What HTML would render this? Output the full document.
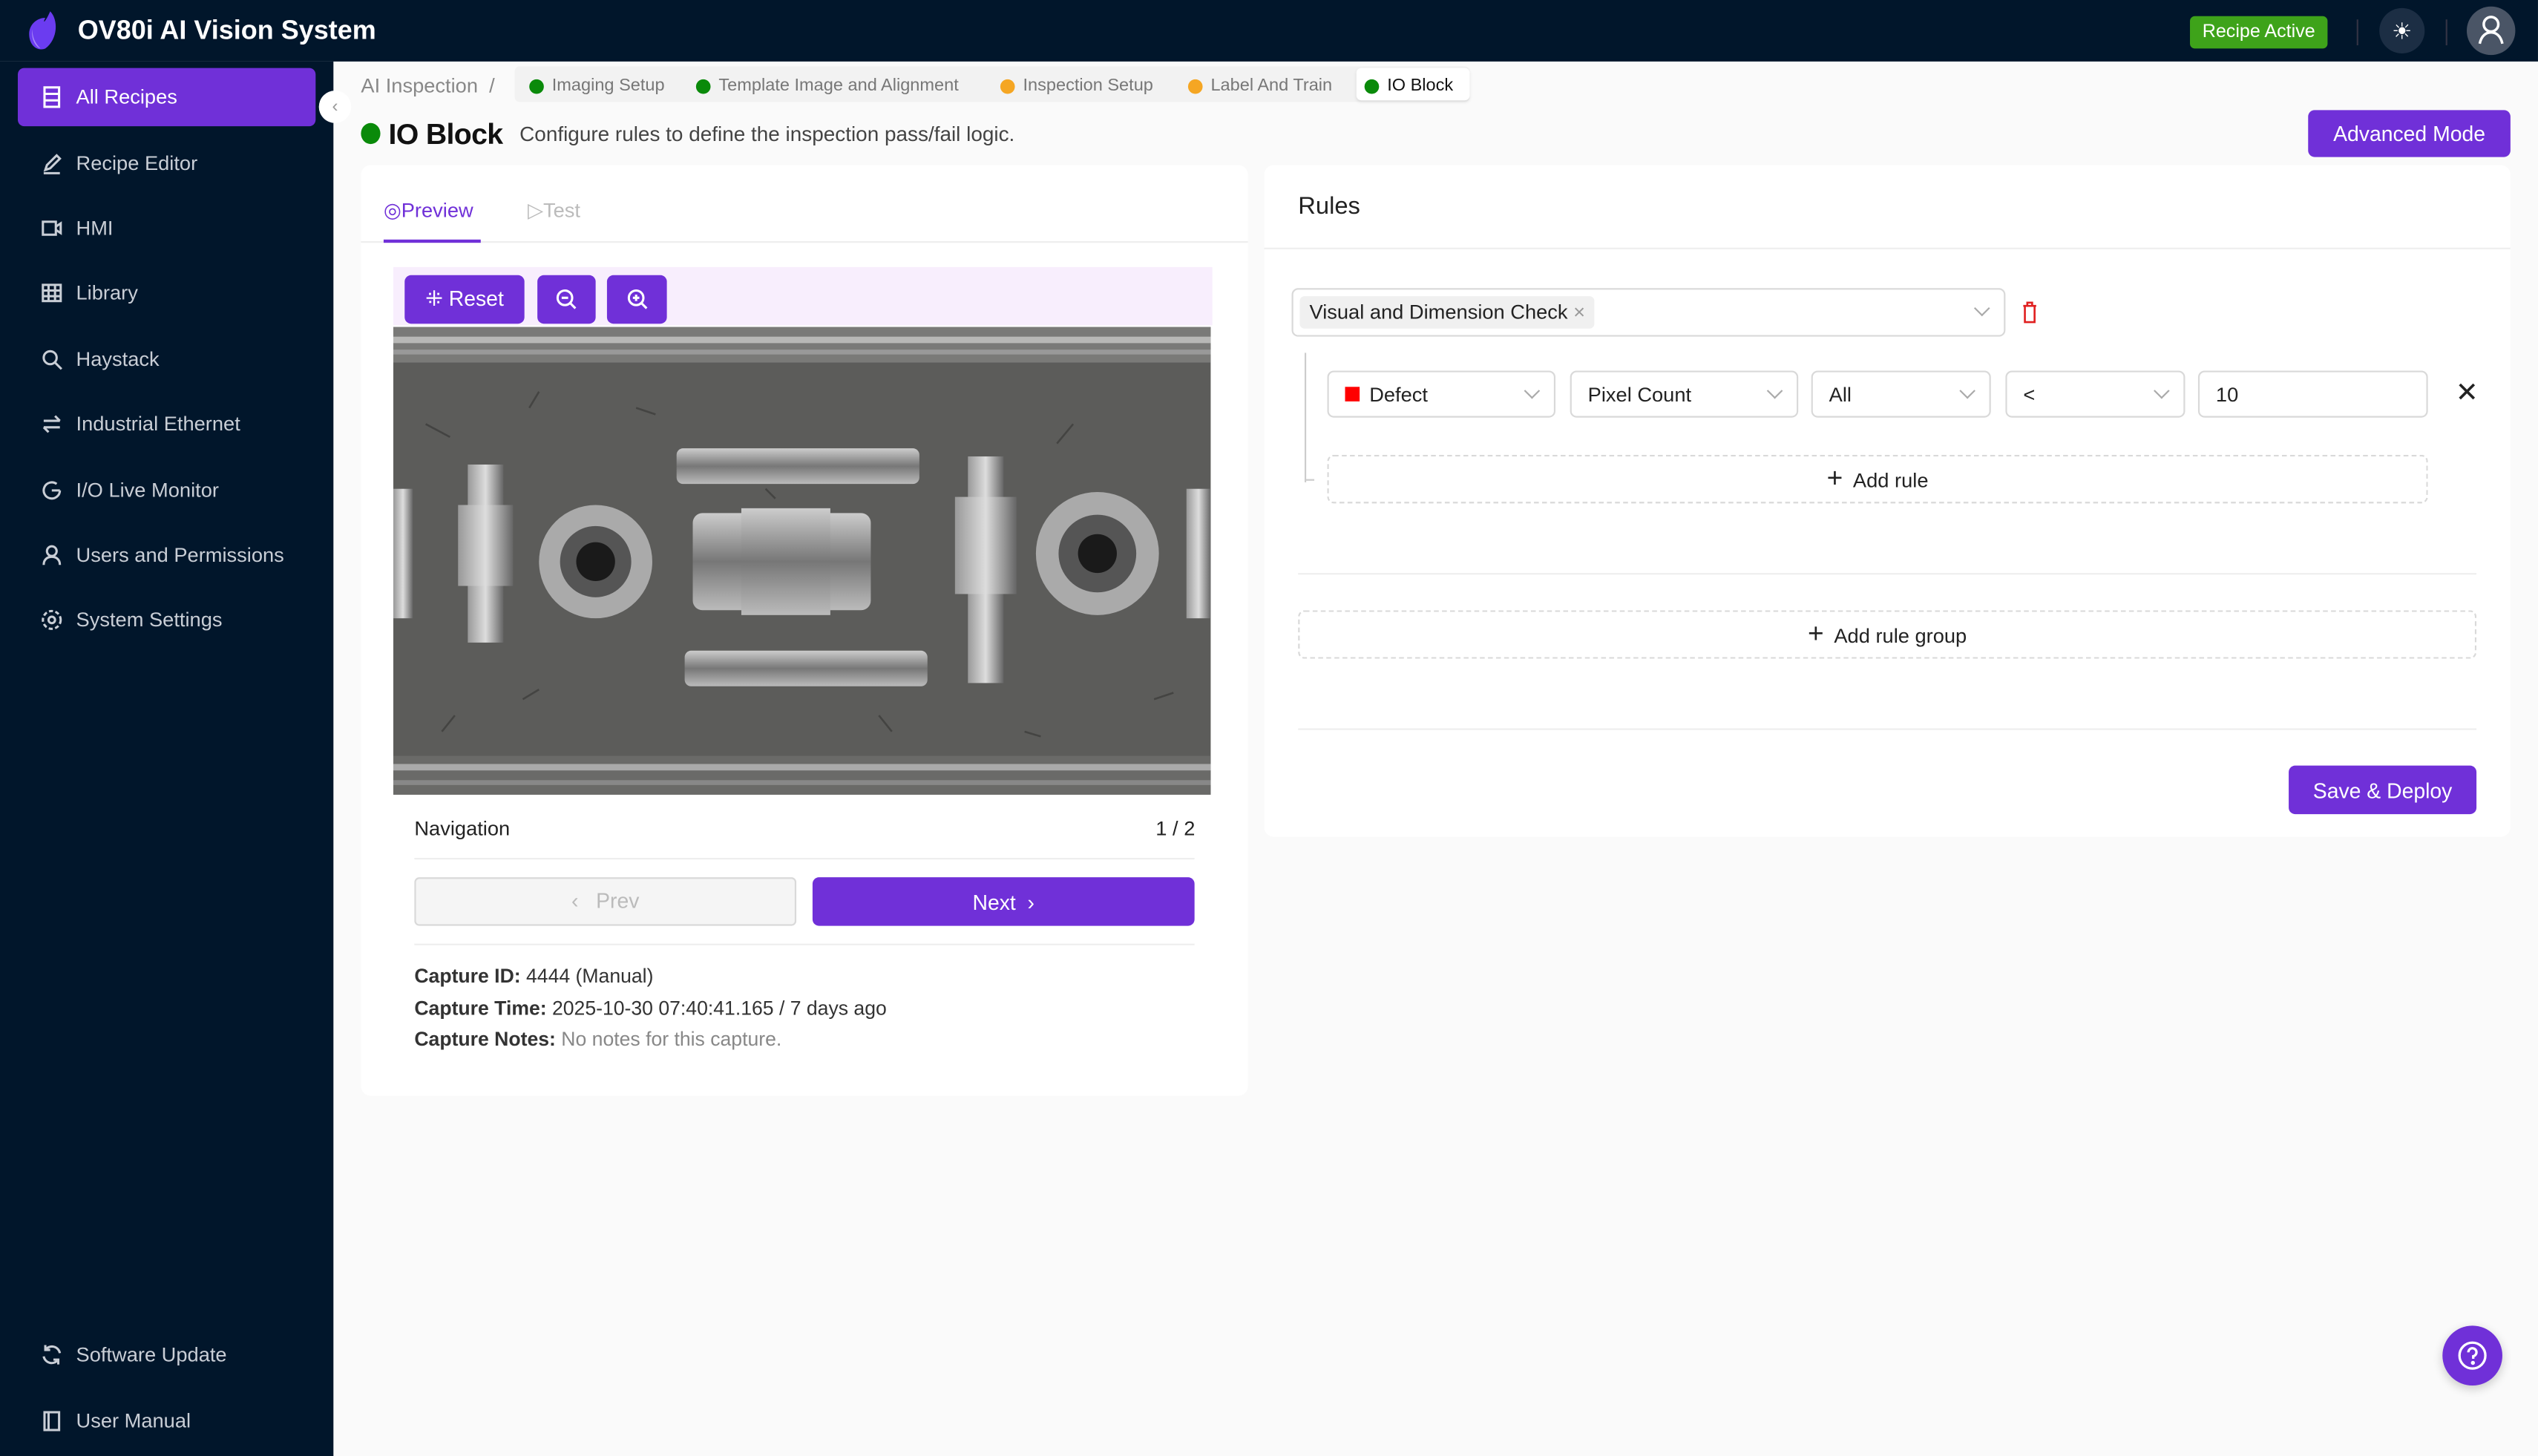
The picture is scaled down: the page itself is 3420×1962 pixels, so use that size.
<!DOCTYPE html>
<html><head><meta charset="utf-8"><style>
*{box-sizing:border-box;margin:0;padding:0}
html,body{width:3420px;height:1962px;overflow:hidden;background:#fafafa}
#w{width:1568px;height:900px;transform:scale(2.1811);transform-origin:0 0;position:relative;font-family:"Liberation Sans",sans-serif;color:#222;font-size:13px;background:#fafafa}
.abs{position:absolute}
#top{left:0;top:0;width:1568px;height:38px;background:#01162b}
#side{left:0;top:38px;width:206px;height:862px;background:#01162b}
.nav{position:absolute;left:11px;width:184px;height:36px;color:#c9ced6;font-size:12.5px;display:flex;align-items:center;padding-left:14px;gap:8px;border-radius:4px}
.nav svg{width:14px;height:14px;stroke:#c9ced6;fill:none;stroke-width:1.4}
.card{background:#fff;border-radius:6px}
.btn{background:#7030d8;color:#fff;border-radius:4px;display:flex;align-items:center;justify-content:center;position:absolute}
.sel{position:absolute;border:1px solid #d9d9d9;border-radius:4px;height:29px;background:#fff;display:flex;align-items:center;padding-left:10px;font-size:12.5px}
.sel .ch{position:absolute;right:10px;top:8px;width:7px;height:7px;border-right:1px solid #aaa;border-bottom:1px solid #aaa;transform:rotate(45deg)}
.dot{display:inline-block;width:9px;height:9px;border-radius:50%;margin-right:5px}
.crumb{font-size:10.8px;color:#777;display:flex;align-items:center}
</style></head><body><div id="w">
<div id="top" class="abs">
 <svg class="abs" style="left:14px;top:6px" width="26" height="26" viewBox="0 0 26 26"><path d="M17 1 C22 6 22 18 14 24 C9 26 4 22 4 15 C4 9 9 5 14 5 C12 9 14 8 17 1Z" fill="#6b3cf0"/><path d="M6 12 C5 18 8 23 11 24 C7 20 6 16 6 12Z" fill="#a98cf7"/></svg>
 <div class="abs" style="left:48px;top:10px;color:#fff;font-size:16.5px;font-weight:bold">OV80i AI Vision System</div>
 <div class="abs" style="left:1353px;top:10px;width:85px;height:20px;background:#3ea31a;color:#fff;font-size:11.5px;border-radius:3px;text-align:center;line-height:20px">Recipe Active</div>
 <div class="abs" style="left:1456px;top:12px;width:1px;height:16px;background:#334"></div>
 <div class="abs" style="left:1470px;top:5px;width:28px;height:28px;border-radius:50%;background:#1c2e44;color:#fff;text-align:center;line-height:28px;font-size:14px">☀</div>
 <div class="abs" style="left:1511px;top:12px;width:1px;height:16px;background:#334"></div>
 <div class="abs" style="left:1524px;top:4px;width:30px;height:30px;border-radius:50%;background:#4a5566"><svg width="30" height="30" viewBox="0 0 30 30" fill="none" stroke="#fff" stroke-width="1.6"><circle cx="15" cy="11" r="4.5"/><path d="M8 23c1-5 4-7 7-7s6 2 7 7"/></svg></div>
</div>
<div id="side" class="abs">
 <div class="nav" style="top:4px;background:#7030d8;color:#fff"><svg viewBox="0 0 14 14" style="stroke:#fff"><rect x="2.5" y="1" width="9" height="12"/><path d="M2.5 5h9M2.5 9h9"/></svg>All Recipes</div>
 <div class="nav" style="top:45px"><svg viewBox="0 0 14 14"><path d="M3 11l1-3 6-6 2 2-6 6zM2 13h10"/></svg>Recipe Editor</div>
 <div class="nav" style="top:85px"><svg viewBox="0 0 14 14"><rect x="1.5" y="3" width="8" height="8"/><path d="M9.5 6l3-2v6l-3-2"/></svg>HMI</div>
 <div class="nav" style="top:125px"><svg viewBox="0 0 14 14"><rect x="1.5" y="2" width="11" height="10"/><path d="M1.5 5.5h11M1.5 9h11M5 2v10M9 2v10"/></svg>Library</div>
 <div class="nav" style="top:166px"><svg viewBox="0 0 14 14"><circle cx="6" cy="6" r="4"/><path d="M9 9l4 4"/></svg>Haystack</div>
 <div class="nav" style="top:206px"><svg viewBox="0 0 14 14"><path d="M2 5h10M9 2l3 3M12 9H2M5 12l-3-3"/></svg>Industrial Ethernet</div>
 <div class="nav" style="top:247px"><svg viewBox="0 0 14 14"><path d="M12 7a5 5 0 1 1-2-4M7 7h5"/></svg>I/O Live Monitor</div>
 <div class="nav" style="top:287px"><svg viewBox="0 0 14 14"><circle cx="7" cy="4.5" r="3"/><path d="M2 13c0-4 3-5 5-5s5 1 5 5"/></svg>Users and Permissions</div>
 <div class="nav" style="top:327px"><svg viewBox="0 0 14 14"><circle cx="7" cy="7" r="2"/><circle cx="7" cy="7" r="5.5" stroke-dasharray="2.5 1.5"/></svg>System Settings</div>
 <div class="nav" style="top:781px"><svg viewBox="0 0 14 14"><path d="M12 6a5 5 0 0 0-9-2M2 8a5 5 0 0 0 9 2M3 1v3h3M11 13v-3H8"/></svg>Software Update</div>
 <div class="nav" style="top:822px"><svg viewBox="0 0 14 14"><rect x="2.5" y="1.5" width="9" height="11"/><path d="M5 1.5v11"/></svg>User Manual</div>
</div>
<div class="abs" style="left:197px;top:56px;width:20px;height:20px;border-radius:50%;background:#fff;color:#999;font-size:11px;text-align:center;line-height:20px">‹</div>
<div class="abs crumb" style="left:223px;top:45px;height:16px;font-size:12.5px;color:#888">AI Inspection&nbsp;&nbsp;/</div>
<div class="abs" style="left:318px;top:41px;width:590px;height:22px;background:#f2f2f2;border-radius:3px"></div>
<div class="abs crumb" style="left:327px;top:47px"><span class="dot" style="background:#0a8a0a"></span>Imaging Setup</div>
<div class="abs crumb" style="left:430px;top:47px"><span class="dot" style="background:#0a8a0a"></span>Template Image and Alignment</div>
<div class="abs crumb" style="left:618px;top:47px"><span class="dot" style="background:#f5a623"></span>Inspection Setup</div>
<div class="abs crumb" style="left:734px;top:47px"><span class="dot" style="background:#f5a623"></span>Label And Train</div>
<div class="abs" style="left:838px;top:42px;width:70px;height:20px;background:#fff;border-radius:3px;box-shadow:0 1px 2px rgba(0,0,0,.1)"></div>
<div class="abs crumb" style="left:843px;top:47px;color:#111"><span class="dot" style="background:#0a8a0a"></span>IO Block</div>
<div class="abs" style="left:223px;top:76px;width:12px;height:13px;border-radius:50%;background:#0a8a0a"></div>
<div class="abs" style="left:240px;top:73px;font-size:18px;font-weight:bold;color:#111;letter-spacing:-0.3px">IO Block</div>
<div class="abs" style="left:321px;top:75px;font-size:12.8px;color:#444">Configure rules to define the inspection pass/fail logic.</div>
<div class="btn" style="left:1426px;top:68px;width:125px;height:29px;font-size:13px">Advanced Mode</div>
<div class="abs card" style="left:223px;top:102px;width:548px;height:575px">
 <div class="abs" style="left:14px;top:20px;color:#7030d8;font-size:12.5px">◎Preview</div>
 <div class="abs" style="left:103px;top:20px;color:#bbb;font-size:12.5px">▷Test</div>
 <div class="abs" style="left:0;top:47px;width:548px;height:1px;background:#eee"></div>
 <div class="abs" style="left:14px;top:46px;width:60px;height:2px;background:#7030d8"></div>
 <div class="abs" style="left:20px;top:63px;width:506px;height:36px;background:#f8eefd"></div>
 <div class="btn" style="left:27px;top:68px;width:74px;height:30px;font-size:13px">⁜&nbsp;Reset</div>
 <div class="btn" style="left:109px;top:68px;width:36px;height:30px"><svg width="14" height="14" viewBox="0 0 14 14" fill="none" stroke="#fff" stroke-width="1.4"><circle cx="6" cy="6" r="4.5"/><path d="M9.5 9.5l3 3M4 6h4"/></svg></div>
 <div class="btn" style="left:152px;top:68px;width:37px;height:30px"><svg width="14" height="14" viewBox="0 0 14 14" fill="none" stroke="#fff" stroke-width="1.4"><circle cx="6" cy="6" r="4.5"/><path d="M9.5 9.5l3 3M4 6h4M6 4v4"/></svg></div>
 <svg class="abs" style="left:20px;top:100px" width="505" height="289" viewBox="0 0 505 289">
  <defs><linearGradient id="m" x1="0" x2="0" y1="0" y2="1"><stop offset="0" stop-color="#ccc"/><stop offset=".5" stop-color="#777"/><stop offset="1" stop-color="#bbb"/></linearGradient>
  <linearGradient id="mh" x1="0" x2="1"><stop offset="0" stop-color="#999"/><stop offset=".5" stop-color="#ddd"/><stop offset="1" stop-color="#666"/></linearGradient></defs>
  <rect width="505" height="289" fill="#5c5c5a"/>
  <g stroke="#3a3a38" stroke-width="1.2" opacity=".7"><path d="M20 60l15 8M80 230l10-6M150 50l12 4M300 240l8 10M420 60l-10 12M470 230l12 -4M230 100l6 6M90 40l-6 10M390 250l10 3M30 250l8-10"/></g>
  <rect width="505" height="22" fill="#7a7a78"/><rect y="6" width="505" height="4" fill="#b8b8b6"/><rect y="14" width="505" height="3" fill="#999"/>
  <rect y="265" width="505" height="24" fill="#6a6a68"/><rect y="270" width="505" height="4" fill="#aaa"/><rect y="280" width="505" height="3" fill="#888"/>
  <rect x="0" y="100" width="12" height="80" fill="url(#mh)"/>
  <rect x="46" y="85" width="22" height="110" fill="url(#mh)"/><rect x="40" y="110" width="34" height="50" fill="url(#mh)"/>
  <circle cx="125" cy="145" r="35" fill="#aaa"/><circle cx="125" cy="145" r="22" fill="#555"/><circle cx="125" cy="145" r="12" fill="#1a1a1a"/>
  <rect x="175" y="75" width="150" height="22" rx="4" fill="url(#m)"/>
  <rect x="185" y="115" width="110" height="60" rx="6" fill="url(#m)"/><rect x="215" y="112" width="55" height="66" fill="url(#m)"/>
  <rect x="180" y="200" width="150" height="22" rx="4" fill="url(#m)"/>
  <rect x="355" y="80" width="22" height="140" fill="url(#mh)"/><rect x="347" y="105" width="38" height="60" fill="url(#mh)"/>
  <circle cx="435" cy="140" r="38" fill="#aaa"/><circle cx="435" cy="140" r="24" fill="#555"/><circle cx="435" cy="140" r="12" fill="#1a1a1a"/>
  <rect x="490" y="100" width="15" height="80" fill="url(#mh)"/>
 </svg>
 <div class="abs" style="left:33px;top:403px;font-size:12.5px">Navigation</div>
 <div class="abs" style="left:491px;top:403px;font-size:12.5px">1 / 2</div>
 <div class="abs" style="left:33px;top:428px;width:482px;height:1px;background:#eee"></div>
 <div class="abs" style="left:33px;top:440px;width:236px;height:30px;border:1px solid #d9d9d9;background:#f5f5f5;border-radius:3px;color:#bbb;text-align:center;line-height:28px">‹&nbsp;&nbsp; Prev</div>
 <div class="btn" style="left:279px;top:440px;width:236px;height:30px">Next&nbsp;&nbsp;›</div>
 <div class="abs" style="left:33px;top:481px;width:482px;height:1px;background:#eee"></div>
 <div class="abs" style="left:33px;top:492px;font-size:12.2px;line-height:19.6px;color:#333"><b>Capture ID:</b> 4444 (Manual)<br><b>Capture Time:</b> 2025-10-30 07:40:41.165 / 7 days ago<br><b>Capture Notes:</b> <span style="color:#888">No notes for this capture.</span></div>
</div>
<div class="abs card" style="left:781px;top:102px;width:770px;height:415px">
 <div class="abs" style="left:21px;top:17px;font-size:15px">Rules</div>
 <div class="abs" style="left:0;top:51px;width:770px;height:1px;background:#eee"></div>
 <div class="sel" style="left:17px;top:76px;width:441px;height:30px;padding-left:4px"><span style="background:#f0f0f0;padding:3px 6px;border-radius:3px">Visual and Dimension Check <span style="color:#999">×</span></span><span class="ch"></span></div>
 <svg class="abs" style="left:468px;top:84px" width="10" height="14" viewBox="0 0 10 14" fill="none" stroke="#e02020" stroke-width="1.2"><path d="M1 3h8M3.5 3V1h3v2M2 3v10h6V3"/></svg>
 <div class="abs" style="left:25px;top:116px;width:1px;height:80px;background:#ccc"></div>
 <div class="abs" style="left:25px;top:194px;width:6px;height:1px;background:#ccc"></div>
 <div class="sel" style="left:39px;top:127px;width:141px"><span style="width:9px;height:9px;background:#f00;margin-right:6px"></span>Defect<span class="ch"></span></div>
 <div class="sel" style="left:189px;top:127px;width:141px">Pixel Count<span class="ch"></span></div>
 <div class="sel" style="left:338px;top:127px;width:111px">All<span class="ch"></span></div>
 <div class="sel" style="left:458px;top:127px;width:111px">&lt;<span class="ch"></span></div>
 <div class="sel" style="left:577px;top:127px;width:142px">10</div>
 <div class="abs" style="left:736px;top:131px;font-size:17px">✕</div>
 <div class="abs" style="left:39px;top:179px;width:680px;height:30px;border:1px dashed #d9d9d9;border-radius:4px;text-align:center;line-height:28px;font-size:12.5px"><span style="font-size:17px">+</span>&nbsp; Add rule</div>
 <div class="abs" style="left:21px;top:252px;width:728px;height:1px;background:#eee"></div>
 <div class="abs" style="left:21px;top:275px;width:728px;height:30px;border:1px dashed #d9d9d9;border-radius:4px;text-align:center;line-height:28px;font-size:12.5px"><span style="font-size:17px">+</span>&nbsp; Add rule group</div>
 <div class="abs" style="left:21px;top:348px;width:728px;height:1px;background:#eee"></div>
 <div class="btn" style="left:633px;top:371px;width:116px;height:30px">Save &amp; Deploy</div>
</div>
<div class="abs" style="left:1509px;top:819px;width:37px;height:37px;border-radius:50%;background:#7030d8;box-shadow:0 2px 6px rgba(0,0,0,.2)"><svg width="37" height="37" viewBox="0 0 37 37" fill="none" stroke="#fff" stroke-width="1.5"><circle cx="18.5" cy="18.5" r="8"/><path d="M16 16.5a2.5 2.5 0 1 1 3 2.4v1.6"/><circle cx="18.8" cy="23" r=".5" fill="#fff"/></svg></div>
</div></body></html>
